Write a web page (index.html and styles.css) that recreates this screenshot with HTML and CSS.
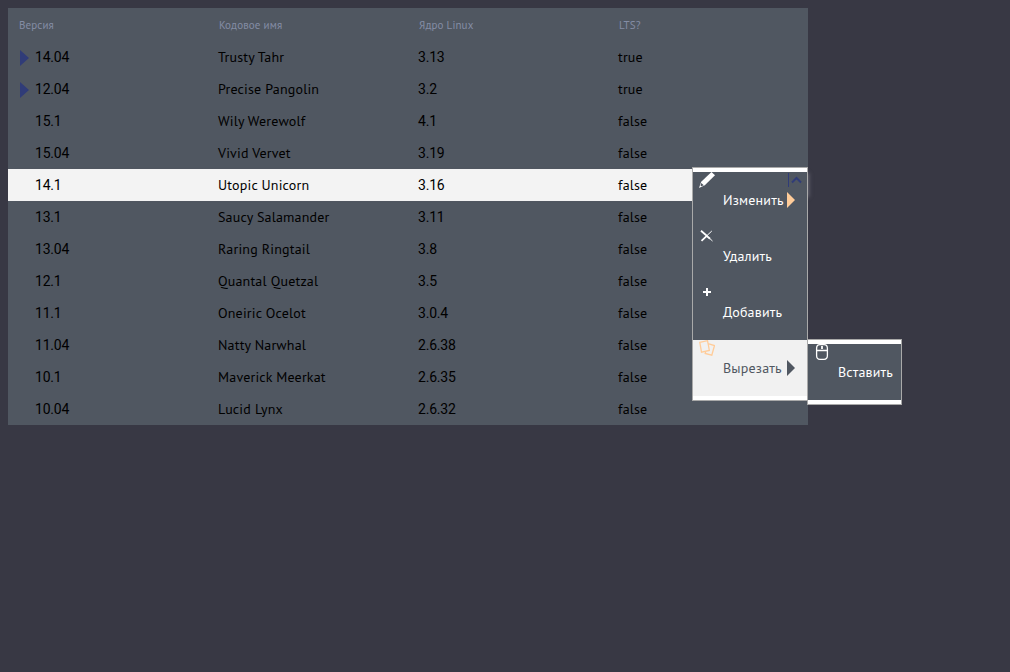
FILE: index.html
```html
<!DOCTYPE html>
<html lang="ru">
<head>
<meta charset="utf-8">
<title>Ubuntu</title>
<link rel="stylesheet" href="styles.css">
</head>
<body>
<div class="grid">
  <div class="head"><span>Версия</span><span>Кодовое имя</span><span>Ядро Linux</span><span>LTS?</span></div>
  <div class="row"><span class="num"><i class="arrow"></i>14.04</span><span>Trusty Tahr</span><span class="num">3.13</span><span>true</span></div>
  <div class="row"><span class="num"><i class="arrow"></i>12.04</span><span>Precise Pangolin</span><span class="num">3.2</span><span>true</span></div>
  <div class="row"><span class="num">15.1</span><span>Wily Werewolf</span><span class="num">4.1</span><span>false</span></div>
  <div class="row"><span class="num">15.04</span><span>Vivid Vervet</span><span class="num">3.19</span><span>false</span></div>
  <div class="row selected"><span class="num">14.1</span><span>Utopic Unicorn</span><span class="num">3.16</span><span>false</span></div>
  <div class="row"><span class="num">13.1</span><span>Saucy Salamander</span><span class="num">3.11</span><span>false</span></div>
  <div class="row"><span class="num">13.04</span><span>Raring Ringtail</span><span class="num">3.8</span><span>false</span></div>
  <div class="row"><span class="num">12.1</span><span>Quantal Quetzal</span><span class="num">3.5</span><span>false</span></div>
  <div class="row"><span class="num">11.1</span><span>Oneiric Ocelot</span><span class="num">3.0.4</span><span>false</span></div>
  <div class="row"><span class="num">11.04</span><span>Natty Narwhal</span><span class="num">2.6.38</span><span>false</span></div>
  <div class="row"><span class="num">10.1</span><span>Maverick Meerkat</span><span class="num">2.6.35</span><span>false</span></div>
  <div class="row"><span class="num">10.04</span><span>Lucid Lynx</span><span class="num">2.6.32</span><span>false</span></div>
</div>
<div class="menu main">
  <div class="item">
    <svg class="icon" viewBox="0 0 16 16"><path fill="#fff" d="M12.5 0 16 3.2 5.8 13.2 0 16 2.2 9.8Z"/><path fill="#505761" d="M2.2 11 4.8 13.2 2.2 14.2 1.6 13.6Z"/></svg>
    <span class="label">Изменить</span><i class="more"></i>
    <svg class="toggle" viewBox="0 0 16 16"><path fill="none" stroke="#303c78" d="M1.5 1V15"/><path fill="none" stroke="#303c78" stroke-width="2" d="M5 10.5 9.5 6 14 10.5"/></svg>
  </div>
  <div class="item">
    <svg class="icon" viewBox="0 0 16 16"><path fill="none" stroke="#fff" stroke-width="1.8" d="M2 2.8 7.8 7.8 2.5 12.8M7.5 7.8 11 10.8"/><path fill="none" stroke="#fff" d="M7.5 8 12.8 3M10 9.8 13.5 13"/></svg>
    <span class="label">Удалить</span>
  </div>
  <div class="item">
    <svg class="icon" viewBox="0 0 16 16"><path fill="none" stroke="#fff" stroke-width="2" d="M8 4V12M4 8H12"/></svg>
    <span class="label">Добавить</span>
  </div>
  <div class="item active">
    <svg class="icon" viewBox="0 0 16 16"><path fill="none" stroke="#ffcc99" stroke-width="1.3" d="M.8 2.3 8.5 .7 9.3 4.5 10.3 10.5 2.5 12.2ZM9 3.7 15.5 5.5 12.8 15.2 6.2 13.5 6.8 11.4"/></svg>
    <span class="label">Вырезать</span><i class="more"></i>
  </div>
</div>
<div class="menu sub">
  <div class="item">
    <svg class="icon" viewBox="0 0 16 16"><path fill="none" stroke="#fff" stroke-width="1.3" d="M6 .7H10Q13.4 .7 13.4 4.5V11.5Q13.4 15.3 10 15.3H6Q2.6 15.3 2.6 11.5V4.5Q2.6 .7 6 .7ZM2.6 6.5H13.4"/><path stroke="#fff" stroke-width="1.8" d="M8 2V5"/></svg>
    <span class="label">Вставить</span>
  </div>
</div>
</body>
</html>
```
FILE: styles.css
```css
body {
  margin: 0;
  padding: 8px;
  background: #383844;
  font: 14px/32px "PT Sans", "Noto Sans", sans-serif;
  letter-spacing: .18px;
  color: #000;
}
.grid {
  width: 800px;
  background: #505761;
}
.head, .row {
  display: grid;
  grid-template-columns: repeat(4, 200px);
  height: 32px;
  line-height: 33px;
  white-space: nowrap;
}
.head {
  height: 33px;
  font-size: 11px;
  line-height: 34px;
  letter-spacing: .12px;
  color: #848da5;
}
.head span { padding-left: 11px; }
.row span { padding-left: 10px; }
.row .num {
  font-family: Roboto, sans-serif;
  font-size: 14px;
  line-height: 32px;
  letter-spacing: -.2px;
}
.row .num:first-child {
  position: relative;
  padding-left: 27px;
}
.row.selected {
  background: #f3f3f3;
  box-shadow: 5px 0 4px -4px #666672;
}
.arrow {
  position: absolute;
  left: 12px;
  top: 9px;
  border: solid transparent;
  border-width: 8px 0 8px 9px;
  border-left-color: #303c78;
}
.menu {
  position: absolute;
  box-sizing: border-box;
  border: 1px solid #a9a9a9;
  padding: 4px 0;
  background: #fff;
  color: #fff;
}
.main {
  left: 692px;
  top: 167px;
  width: 116px;
}
.sub {
  left: 807px;
  top: 339px;
  width: 95px;
}
.item {
  position: relative;
  display: flex;
  align-items: center;
  height: 56px;
  padding-left: 30px;
  line-height: 33px;
  background: #505761;
}
.item.active {
  background: #f1f1f1;
  color: #505761;
}
.icon {
  position: absolute;
  left: 6px;
  top: 0;
  width: 16px;
  height: 16px;
}
.more {
  position: absolute;
  left: 94px;
  top: 20px;
  border: solid transparent;
  border-width: 8px 0 8px 8px;
  border-left-color: #ffcc99;
}
.active .more { border-left-color: #505761; }
.toggle {
  position: absolute;
  left: 94px;
  top: 0;
  width: 16px;
  height: 16px;
}
```
